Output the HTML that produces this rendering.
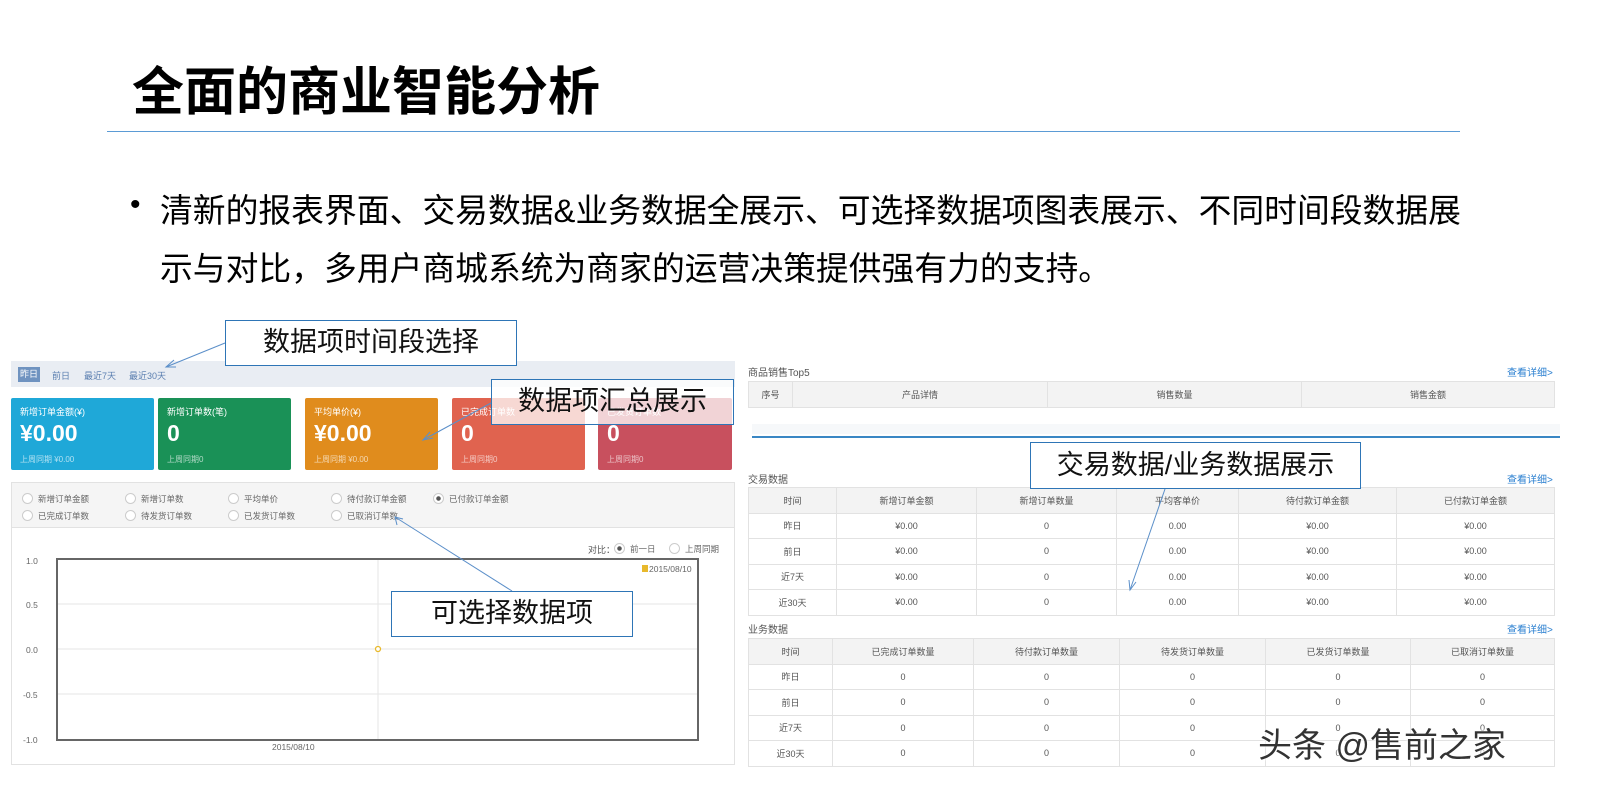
<!DOCTYPE html>
<html><head><meta charset="utf-8"><style>
*{margin:0;padding:0;box-sizing:border-box}
body{width:1600px;height:795px;background:#fff;position:relative;overflow:hidden;font-family:"Liberation Sans","Noto Sans CJK SC",sans-serif;color:#000}
.a{position:absolute}
.s{font-size:9px;color:#555;white-space:nowrap}
.card{position:absolute;top:398px;height:72px;width:143px;color:#fff;border-radius:2px}
.card .t{position:absolute;left:9px;top:7px;font-size:9px}
.card .v{position:absolute;left:9px;top:22px;font-size:23px;font-weight:bold}
.card .f{position:absolute;left:9px;top:56px;font-size:8px;opacity:.65}
.rd{position:absolute;font-size:8.5px;color:#666;white-space:nowrap}
.rd:before{content:"";display:inline-block;width:9px;height:9px;border:1px solid #ccc;border-radius:50%;vertical-align:-2px;margin-right:5px;background:#fff}
.rd.on:before{background:radial-gradient(circle,#555 0 2px,#fff 2.5px)}
table{position:absolute;border-collapse:collapse;font-size:9px;color:#555;text-align:center}
td{border:1px solid #e2e2e2;height:25.5px}
tr.h td{background:#f3f3f3}
.box{position:absolute;border:1.5px solid #2e75b6;background:#fff;font-size:27px;text-align:center;white-space:nowrap;color:#111}
.lk{position:absolute;font-size:10px;color:#2a7fd0}
</style></head><body>
<div class="a" style="left:132px;top:50px;font-size:52px;font-weight:bold;white-space:nowrap">全面的商业智能分析</div>
<div class="a" style="left:107px;top:131px;width:1353px;height:1px;background:#5b9bd5"></div>
<div class="a" style="left:130px;top:188px;font-size:30px">•</div>
<div class="a" style="left:160px;top:182px;font-size:32.8px;line-height:58px;width:1380px;white-space:nowrap">清新的报表界面、交易数据&amp;业务数据全展示、可选择数据项图表展示、不同时间段数据展<br>示与对比，多用户商城系统为商家的运营决策提供强有力的支持。</div>

<div class="a" style="left:11px;top:361px;width:724px;height:26px;background:#e9edf3"></div>
<div class="a" style="left:18px;top:367px;width:22px;height:15px;background:#6f93c0;color:#fff;font-size:9px;text-align:center;line-height:15px">昨日</div>
<div class="a s" style="left:52px;top:369px;color:#5b7fb0">前日</div>
<div class="a s" style="left:84px;top:369px;color:#5b7fb0">最近7天</div>
<div class="a s" style="left:129px;top:369px;color:#5b7fb0">最近30天</div>

<div class="card" style="left:11px;background:#1fa8d8"><div class="t">新增订单金额(¥)</div><div class="v">¥0.00</div><div class="f">上周同期 ¥0.00</div></div>
<div class="card" style="left:158px;width:133px;background:#1a9157"><div class="t">新增订单数(笔)</div><div class="v">0</div><div class="f">上周同期0</div></div>
<div class="card" style="left:305px;width:133px;background:#e08c1d"><div class="t">平均单价(¥)</div><div class="v">¥0.00</div><div class="f">上周同期 ¥0.00</div></div>
<div class="card" style="left:452px;width:133px;background:#e0634f"><div class="t">已完成订单数</div><div class="v">0</div><div class="f">上周同期0</div></div>
<div class="card" style="left:598px;width:134px;background:#c8505e"><div class="t">已发货订单数</div><div class="v">0</div><div class="f">上周同期0</div></div>

<div class="a" style="left:11px;top:482px;width:724px;height:283px;border:1px solid #e2e2e2"></div>
<div class="a" style="left:12px;top:483px;width:722px;height:45px;background:#f5f5f5;border-bottom:1px solid #e2e2e2"></div>
<div class="rd" style="left:22px;top:493px">新增订单金额</div>
<div class="rd" style="left:125px;top:493px">新增订单数</div>
<div class="rd" style="left:228px;top:493px">平均单价</div>
<div class="rd" style="left:331px;top:493px">待付款订单金额</div>
<div class="rd on" style="left:433px;top:493px">已付款订单金额</div>
<div class="rd" style="left:22px;top:510px">已完成订单数</div>
<div class="rd" style="left:125px;top:510px">待发货订单数</div>
<div class="rd" style="left:228px;top:510px">已发货订单数</div>
<div class="rd" style="left:331px;top:510px">已取消订单数</div>
<div class="a s" style="left:588px;top:543px">对比：</div>
<div class="rd on" style="left:614px;top:543px">前一日</div>
<div class="rd" style="left:669px;top:543px">上周同期</div>
<svg class="a" style="left:0;top:530px" width="740" height="240">
<g stroke="#e6e6e6"><line x1="57" y1="74" x2="698" y2="74"/><line x1="57" y1="119" x2="698" y2="119"/><line x1="57" y1="164" x2="698" y2="164"/><line x1="378" y1="30" x2="378" y2="210"/></g>
<rect x="57" y="29" width="641" height="181" fill="none" stroke="#666" stroke-width="2"/>
<circle cx="378" cy="119" r="2.5" fill="#fff" stroke="#e8b92c" stroke-width="1.3"/>
<rect x="642" y="35" width="6" height="7" fill="#e8b92c"/>
<g font-size="8.5" fill="#666" font-family="Liberation Sans"><text x="649" y="42">2015/08/10</text>
<text x="26" y="34">1.0</text><text x="26" y="78">0.5</text><text x="26" y="123">0.0</text><text x="23" y="168">-0.5</text><text x="23" y="213">-1.0</text><text x="272" y="220">2015/08/10</text></g>
</svg>

<div class="a s" style="left:748px;top:364px;font-size:10px">商品销售Top5</div>
<div class="lk" style="left:1507px;top:364px">查看详细&gt;</div>
<table style="left:748px;top:381px;width:807px"><tr class="h"><td style="width:44px">序号</td><td style="width:255px">产品详情</td><td style="width:254px">销售数量</td><td>销售金额</td></tr></table>
<div class="a" style="left:752px;top:424px;width:808px;height:10px;background:#f6f8fa"></div>
<div class="a" style="left:752px;top:436px;width:808px;height:2px;background:#3a87c4"></div>

<div class="a s" style="left:748px;top:471px;font-size:10px">交易数据</div>
<div class="lk" style="left:1507px;top:471px">查看详细&gt;</div>
<table style="left:748px;top:487px;width:807px">
<tr class="h"><td style="width:88px">时间</td><td style="width:140px">新增订单金额</td><td style="width:140px">新增订单数量</td><td style="width:122px">平均客单价</td><td style="width:158px">待付款订单金额</td><td>已付款订单金额</td></tr>
<tr><td>昨日</td><td>¥0.00</td><td>0</td><td>0.00</td><td>¥0.00</td><td>¥0.00</td></tr>
<tr><td>前日</td><td>¥0.00</td><td>0</td><td>0.00</td><td>¥0.00</td><td>¥0.00</td></tr>
<tr><td>近7天</td><td>¥0.00</td><td>0</td><td>0.00</td><td>¥0.00</td><td>¥0.00</td></tr>
<tr><td>近30天</td><td>¥0.00</td><td>0</td><td>0.00</td><td>¥0.00</td><td>¥0.00</td></tr>
</table>
<div class="a s" style="left:748px;top:621px;font-size:10px">业务数据</div>
<div class="lk" style="left:1507px;top:621px">查看详细&gt;</div>
<table style="left:748px;top:638px;width:807px">
<tr class="h"><td style="width:84px">时间</td><td style="width:141px">已完成订单数量</td><td style="width:146px">待付款订单数量</td><td style="width:146px">待发货订单数量</td><td style="width:145px">已发货订单数量</td><td>已取消订单数量</td></tr>
<tr><td>昨日</td><td>0</td><td>0</td><td>0</td><td>0</td><td>0</td></tr>
<tr><td>前日</td><td>0</td><td>0</td><td>0</td><td>0</td><td>0</td></tr>
<tr><td>近7天</td><td>0</td><td>0</td><td>0</td><td>0</td><td>0</td></tr>
<tr><td>近30天</td><td>0</td><td>0</td><td>0</td><td>0</td><td>0</td></tr>
</table>

<svg class="a" style="left:0;top:0" width="1600" height="795">
<g stroke="#5b8fc9" stroke-width="1" fill="none">
<line x1="225" y1="343" x2="166" y2="367"/><polyline points="174,360 166,367 176,367"/>
<line x1="491" y1="403" x2="423" y2="440"/><polyline points="430,432 423,440 433,438"/>
<line x1="512" y1="591" x2="395" y2="517"/><polyline points="397,525 395,517 403,519"/>
<line x1="1165" y1="489" x2="1130" y2="590"/><polyline points="1129,580 1130,590 1136,582"/>
</g></svg>
<div class="box" style="left:225px;top:320px;width:292px;height:46px;line-height:43px">数据项时间段选择</div>
<div class="box" style="left:491px;top:379px;width:243px;height:46px;line-height:43px;background:rgba(255,255,255,.75)">数据项汇总展示</div>
<div class="box" style="left:391px;top:591px;width:242px;height:46px;line-height:43px">可选择数据项</div>
<div class="box" style="left:1030px;top:442px;width:331px;height:47px;line-height:44px">交易数据/业务数据展示</div>

<div class="a" style="left:1258px;top:718px;font-size:34px;color:#333;text-shadow:0 0 3px #fff,0 0 3px #fff;white-space:nowrap">头条 @售前之家</div>
</body></html>
